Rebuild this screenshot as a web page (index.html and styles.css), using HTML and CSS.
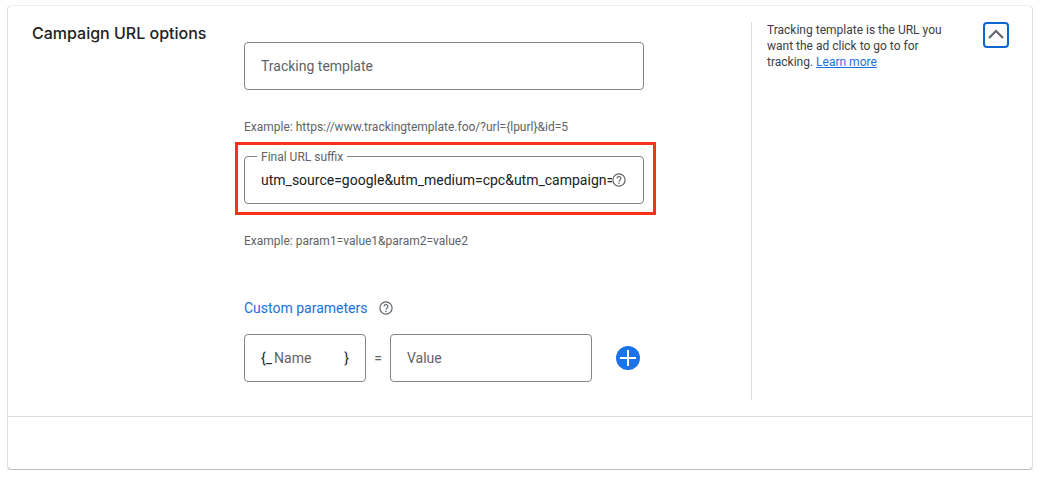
FILE: index.html
```html
<!DOCTYPE html>
<html lang="en">
<head>
    <meta charset="UTF-8">
    <meta name="viewport" content="width=device-width, initial-scale=1.0">
    <title>Campaign URL options</title>
    <link rel="stylesheet" href="styles.css">
</head>
<body>
    <main class="card">
        <section class="section">
            <h2 class="title">Campaign URL options</h2>

            <form class="fields">
                <div class="field">
                    <input type="text" id="template" placeholder="Tracking template" aria-label="Tracking template">
                </div>
                <p class="hint">Example: https://www.trackingtemplate.foo/?url={lpurl}&amp;id=5</p>

                <div class="field suffix highlight">
                    <label for="suffix">Final URL suffix</label>
                    <input type="text" id="suffix" value="utm_source=google&amp;utm_medium=cpc&amp;utm_campaign=">
                    <svg class="help-icon" viewBox="0 0 14 14" aria-hidden="true">
                        <circle cx="7" cy="7" r="6.1"/>
                        <path d="M5.1 5.5a1.9 1.9 0 1 1 3.1 1.4C7.5 7.4 7 7.7 7 8.6"/>
                        <path d="M7 9.6v1.3"/>
                    </svg>
                </div>
                <p class="hint">Example: param1=value1&amp;param2=value2</p>

                <div class="params-title">
                    <a href="#params">Custom parameters</a>
                    <svg class="help-icon" viewBox="0 0 14 14" aria-hidden="true">
                        <circle cx="7" cy="7" r="6.1"/>
                        <path d="M5.1 5.5a1.9 1.9 0 1 1 3.1 1.4C7.5 7.4 7 7.7 7 8.6"/>
                        <path d="M7 9.6v1.3"/>
                    </svg>
                </div>
                <div class="params" id="params">
                    <div class="field name">
                        <span>{_</span>
                        <input type="text" placeholder="Name" aria-label="Name">
                        <span>}</span>
                    </div>
                    <span class="equals">=</span>
                    <div class="field value">
                        <input type="text" placeholder="Value" aria-label="Value">
                    </div>
                    <button type="button" class="add" aria-label="Add parameter">
                        <svg viewBox="0 0 24 24" aria-hidden="true">
                            <circle cx="12" cy="12" r="12"/>
                            <path d="M12 4v16M4 12h16"/>
                        </svg>
                    </button>
                </div>
            </form>

            <aside class="help">
                <p>Tracking template is the URL you want the ad click to go to for tracking. <a href="#more">Learn more</a></p>
                <button type="button" class="collapse" aria-label="Collapse">
                    <svg viewBox="0 0 22 22" aria-hidden="true">
                        <path d="M4 14l7-7 7 7"/>
                    </svg>
                </button>
            </aside>
        </section>
        <footer class="footer"></footer>
    </main>
</body>
</html>
```
FILE: styles.css
```css
* {
    box-sizing: border-box;
}

body {
    margin: 5px 7px 8px;
    background-color: #fff;
    color: #202124;
    font-family: Roboto, Arial, sans-serif;
    font-size: 14px;
}

h2, p {
    margin: 0;
}

a {
    color: #1a6fdb;
}

.card {
    background-color: #fff;
    border: 1px solid #e0e0e0;
    border-top-color: #efefef;
    border-bottom-color: #bdbdbd;
    border-radius: 5px;
    box-shadow: 0 1px 2px rgba(0, 0, 0, 0.2);
}

.section {
    display: flex;
    padding: 16px 0;
    border-bottom: 1px solid #dadce0;
}

.title {
    width: 236px;
    padding-left: 24px;
    font-family: Inter, Roboto, sans-serif;
    font-size: 16px;
    font-weight: 500;
    line-height: 22px;
}

.fields {
    flex: 1;
    padding: 20px 0 18px;
}

/* text boxes */
.field {
    display: flex;
    align-items: center;
    position: relative;
    width: 400px;
    height: 48px;
    padding: 0 16px;
    border: 1px solid #80868b;
    border-radius: 4px;
}

.field input {
    flex: 1;
    min-width: 0;
    padding: 0;
    border: none;
    outline: none;
    background: none;
    color: #202124;
    font: inherit;
}

.field input::placeholder {
    color: #5f6368;
    opacity: 1;
}

.suffix {
    margin-top: 21px;
    padding-right: 17px;
}

.suffix label {
    position: absolute;
    top: -7px;
    left: 12px;
    padding: 0 4px;
    background-color: #fff;
    color: #5f6368;
    font-size: 12px;
    line-height: 14px;
}

.highlight::after {
    content: "";
    position: absolute;
    inset: -15px -13px -12px -10px;
    border: 3px solid #f9301a;
    pointer-events: none;
}

.hint {
    margin-top: 29px;
    color: #5f6368;
    font-size: 12px;
    line-height: 16px;
}

.help-icon {
    flex: none;
    width: 14px;
    height: 14px;
    fill: none;
    stroke: #5f6368;
    stroke-width: 1.2;
}

/* custom parameters */
.params-title {
    display: flex;
    align-items: center;
    gap: 12px;
    margin-top: 49px;
    line-height: 20px;
}

.params-title a {
    text-decoration: none;
}

.params {
    display: flex;
    align-items: center;
    margin-top: 16px;
}

.name {
    gap: 2px;
    width: 122px;
}

.value {
    width: 202px;
}

.equals {
    width: 24px;
    color: #5f6368;
    text-align: center;
}

.add {
    width: 24px;
    height: 24px;
    margin-left: 24px;
    padding: 0;
    border: none;
    background: none;
    cursor: pointer;
}

.add svg {
    display: block;
    fill: #1a73e8;
    stroke-width: 2;
}

.add path {
    stroke: #fff;
}

/* right column */
.help {
    display: flex;
    align-items: flex-start;
    justify-content: space-between;
    width: 281px;
    padding: 0 23px 0 15px;
    border-left: 1px solid #dadce0;
}

.help p {
    width: 192px;
    color: #3c4043;
    font-size: 12px;
    line-height: 16px;
}

.collapse {
    width: 26px;
    height: 26px;
    padding: 0;
    border: 2px solid #0b66d0;
    border-radius: 4px;
    background: none;
    cursor: pointer;
}

.collapse svg {
    display: block;
    fill: none;
    stroke: #5f6368;
    stroke-width: 2;
}

.footer {
    height: 52px;
}
```
